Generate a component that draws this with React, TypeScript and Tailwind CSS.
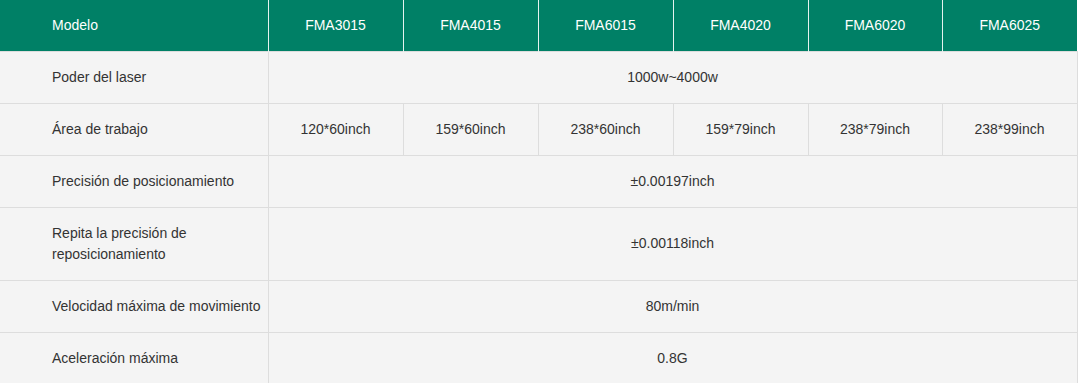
import React from "react";

const models = ["FMA3015", "FMA4015", "FMA6015", "FMA4020", "FMA6020", "FMA6025"];
const areas = ["120*60inch", "159*60inch", "238*60inch", "159*79inch", "238*79inch", "238*99inch"];

const rows: { label: React.ReactNode; value?: string; values?: string[] }[] = [
  { label: "Poder del laser", value: "1000w~4000w" },
  { label: "Área de trabajo", values: areas },
  { label: "Precisión de posicionamiento", value: "±0.00197inch" },
  { label: <>Repita la precisión de<br />reposicionamiento</>, value: "±0.00118inch" },
  { label: <span className="whitespace-nowrap">Velocidad máxima de movimiento</span>, value: "80m/min" },
  { label: "Aceleración máxima", value: "0.8G" },
];

export default function App() {
  return (
    <div className="bg-white w-[1079px] h-[383px] overflow-hidden" style={{ fontFamily: '"Liberation Sans", Arial, sans-serif' }}>
      <table className="w-[1077px] table-fixed border-collapse text-[14px] leading-[21px]">
        <colgroup>
          <col className="w-[268px]" />
          <col className="w-[135px]" />
          <col className="w-[135px]" />
          <col className="w-[135px]" />
          <col className="w-[135px]" />
          <col className="w-[134px]" />
          <col className="w-[135px]" />
        </colgroup>
        <thead>
          <tr className="bg-[#008066] text-white h-[51px]">
            <th className="text-left font-normal pl-[52px] pr-1 border-r border-[#e6f2ef]">Modelo</th>
            {models.map((m, i) => (
              <th
                key={m}
                className={`font-normal text-center ${i < models.length - 1 ? "border-r border-[#e6f2ef]" : ""}`}
              >
                {m}
              </th>
            ))}
          </tr>
        </thead>
        <tbody className="bg-[#f4f4f4] text-[#333333]">
          {rows.map((r, idx) => (
            <tr key={idx} className="border-t border-[#dddddd]">
              <td className="pl-[52px] pr-1 py-[15px] border-r border-[#dddddd] align-middle">{r.label}</td>
              {r.values ? (
                r.values.map((v, i) => (
                  <td key={i} className="text-center border-r border-[#dddddd] py-[15px]">
                    {v}
                  </td>
                ))
              ) : (
                <td colSpan={6} className="text-center py-[15px] border-r border-[#dddddd]">
                  {r.value}
                </td>
              )}
            </tr>
          ))}
        </tbody>
      </table>
    </div>
  );
}
